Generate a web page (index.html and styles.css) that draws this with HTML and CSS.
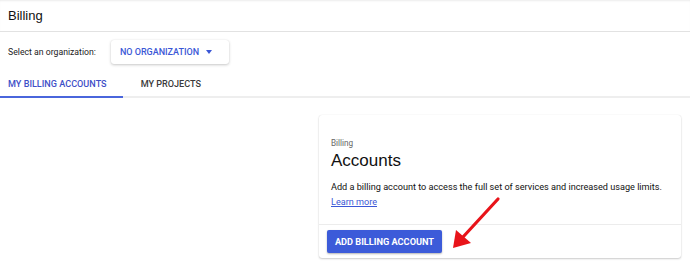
FILE: index.html
```html
<!DOCTYPE html>
<html>
<head>
<meta charset="utf-8">
<link rel="stylesheet" href="styles.css">
</head>
<body>
<div class="header"><span class="title">Billing</span></div>
<div class="org-row">
  <span class="org-label">Select an organization:</span>
  <button class="org-select"><span>NO ORGANIZATION</span><span class="caret"></span></button>
</div>
<div class="tabs">
  <div class="tab active">MY BILLING ACCOUNTS</div>
  <div class="tab">MY PROJECTS</div>
</div>
<div class="content">
  <div class="card">
    <div class="card-body">
      <div class="eyebrow">Billing</div>
      <div class="card-title">Accounts</div>
      <p class="desc">Add a billing account to access the full set of services and increased usage limits.</p>
      <a class="learn" href="#">Learn more</a>
    </div>
    <div class="card-actions">
      <button class="primary">ADD BILLING ACCOUNT</button>
    </div>
  </div>
</div>
<svg class="arrow" width="690" height="280" viewBox="0 0 690 280">
  <line x1="498" y1="199" x2="463" y2="237" stroke="#e8141a" stroke-width="3.2" stroke-linecap="round"/>
  <polygon points="453,248 456,230 471,243" fill="#e8141a"/>
</svg>
</body>
</html>
```
FILE: styles.css
```css
html, body {
  margin: 0;
  padding: 0;
  background: #fff;
}
body {
  font-family: Roboto, "Noto Sans", sans-serif;
  color: #202124;
  position: relative;
  width: 690px;
  height: 280px;
  overflow: hidden;
}
.header {
  height: 31px;
  border-bottom: 1px solid #e2e2e2;
  box-shadow: inset 0 2px 2px -1px rgba(0,0,0,0.08);
  padding-left: 8px;
  display: flex;
  align-items: center;
}
.title {
  font-family: "Liberation Sans", Arial, sans-serif;
  font-size: 13px;
  color: #111;
}
.org-row {
  display: flex;
  align-items: center;
  padding: 8px 8px 8px 8px;
  gap: 15px;
}
.org-label {
  font-size: 8.7px;
  color: #222;
}
.org-select {
  width: 118px;
  height: 24px;
  border: none;
  background: #fff;
  border-radius: 3px;
  box-shadow: 0 1px 3px rgba(0,0,0,0.22), 0 0 1px rgba(0,0,0,0.1);
  display: flex;
  align-items: center;
  padding: 0 0 0 9px;
  gap: 7px;
  font-family: Roboto, sans-serif;
  font-size: 9px;
  font-weight: 500;
  color: #3b57d6;
  white-space: nowrap;
}
.caret {
  width: 0;
  height: 0;
  border-left: 3.5px solid transparent;
  border-right: 3.5px solid transparent;
  border-top: 4px solid #3b57d6;
}
.tabs {
  display: flex;
  border-bottom: 2px solid #eeeeee;
  height: 24px;
}
.tab {
  font-size: 9.1px;
  font-weight: 500;
  color: #3a3a3a;
  padding: 0 16px 0 18px;
  display: flex;
  align-items: center;
  margin-bottom: -2px;
  border-bottom: 2px solid transparent;
  white-space: nowrap;
}
.tab.active {
  padding-left: 8px;
  color: #3e4fc7;
  border-bottom-color: #4a66dc;
}
.content {
  display: flex;
  justify-content: flex-end;
  padding: 17px 9px 0 0;
}
.card {
  width: 362px;
  border-radius: 3px;
  box-shadow: 0 1px 2px rgba(0,0,0,0.2), 0 0 1px rgba(0,0,0,0.12);
  background: #fff;
}
.card-body {
  padding: 23px 12px 15px 12px;
  border-bottom: 1px solid #ececec;
}
.eyebrow {
  font-size: 8.2px;
  color: #666;
}
.card-title {
  font-family: "Liberation Sans", Arial, sans-serif;
  font-size: 17px;
  color: #111;
  margin-top: 3px;
}
.desc {
  font-size: 9.15px;
  line-height: 14px;
  color: #111;
  margin: 9px 0 1px 0;
  white-space: nowrap;
}
.learn {
  display: block;
  font-size: 9.1px;
  line-height: 14px;
  color: #3b57d6;
}
.card-actions {
  padding: 5px 8px 5px 8px;
}
.primary {
  width: 115px;
  height: 23px;
  background: #3c5bd9;
  border: none;
  border-radius: 2px;
  box-shadow: 0 1px 2px rgba(0,0,0,0.3);
  color: #fff;
  font-family: Roboto, sans-serif;
  font-weight: 700;
  font-size: 9.2px;
  padding: 0;
}
.arrow {
  position: absolute;
  left: 0;
  top: 0;
  pointer-events: none;
}
```
